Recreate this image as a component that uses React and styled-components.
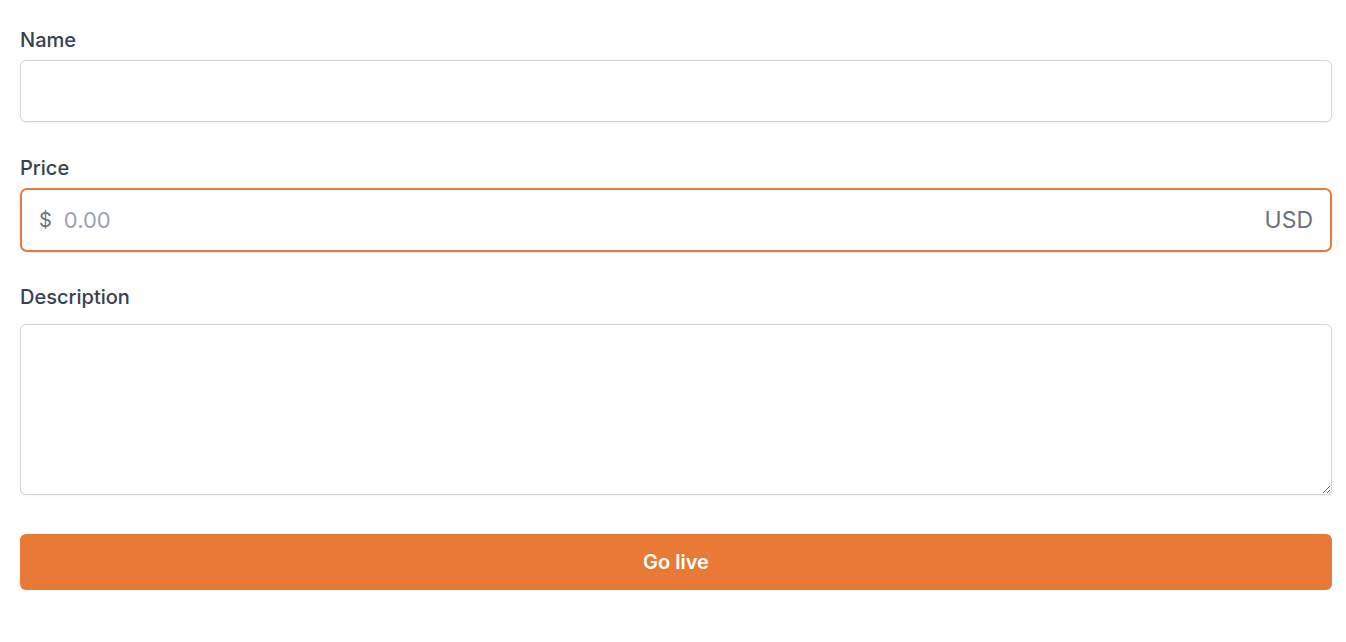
import styled, { createGlobalStyle } from "styled-components";

const GlobalStyle = createGlobalStyle`
  body {
    margin: 0;
    background: #fff;
    font-family: Inter, "Noto Sans", "Liberation Sans", sans-serif;
  }
  * { box-sizing: border-box; }
`;

const Form = styled.form`
  display: flex;
  flex-direction: column;
  padding: 26px 14px 20px 20px;
`;

const Field = styled.div`
  display: flex;
  flex-direction: column;
  gap: ${(p) => p.$gap || 6}px;
  margin-bottom: ${(p) => p.$spacing || 32}px;
`;

const Label = styled.label`
  font-size: 20px;
  line-height: 28px;
  font-weight: 500;
  color: #374151;
`;

const TextInput = styled.input`
  height: 62px;
  width: 100%;
  border: 1px solid #d1d5db;
  border-radius: 6px;
  box-shadow: 0 1px 2px rgba(0, 0, 0, 0.06);
  padding: 0 16px;
  font-size: 20px;
  font-family: inherit;
  outline: none;
`;

const PriceBox = styled.div`
  height: 64px;
  display: flex;
  align-items: center;
  gap: 12px;
  padding: 0 17px 0 17px;
  border: 2px solid #e87a35;
  border-radius: 7px;
  box-shadow: 0 1px 2px rgba(0, 0, 0, 0.06);
`;

const Affix = styled.span`
  font-size: ${(p) => p.$size || 20}px;
  color: #6b7280;
`;

const PriceInput = styled.input`
  flex: 1;
  border: none;
  outline: none;
  padding: 0;
  font-size: 22px;
  font-family: inherit;
  color: #111827;
  &::placeholder {
    color: #9ca3af;
  }
`;

const TextArea = styled.textarea`
  height: 171px;
  width: 100%;
  border: 1px solid #d1d5db;
  border-radius: 6px;
  box-shadow: 0 1px 2px rgba(0, 0, 0, 0.06);
  padding: 12px 16px;
  font-size: 20px;
  font-family: inherit;
  outline: none;
`;

const SubmitButton = styled.button`
  height: 56px;
  width: 100%;
  border: none;
  border-radius: 6px;
  background: #e87a35;
  color: #fff;
  font-family: inherit;
  font-size: 20px;
  font-weight: 600;
  cursor: pointer;
`;

export default function App() {
  return (
    <>
      <GlobalStyle />
      <Form onSubmit={(e) => e.preventDefault()}>
        <Field>
          <Label htmlFor="name">Name</Label>
          <TextInput id="name" type="text" />
        </Field>
        <Field $spacing={31}>
          <Label htmlFor="price">Price</Label>
          <PriceBox>
            <Affix>$</Affix>
            <PriceInput id="price" type="text" placeholder="0.00" />
            <Affix $size={23}>USD</Affix>
          </PriceBox>
        </Field>
        <Field $gap={13} $spacing={39}>
          <Label htmlFor="description">Description</Label>
          <TextArea id="description" />
        </Field>
        <SubmitButton type="submit">Go live</SubmitButton>
      </Form>
    </>
  );
}
